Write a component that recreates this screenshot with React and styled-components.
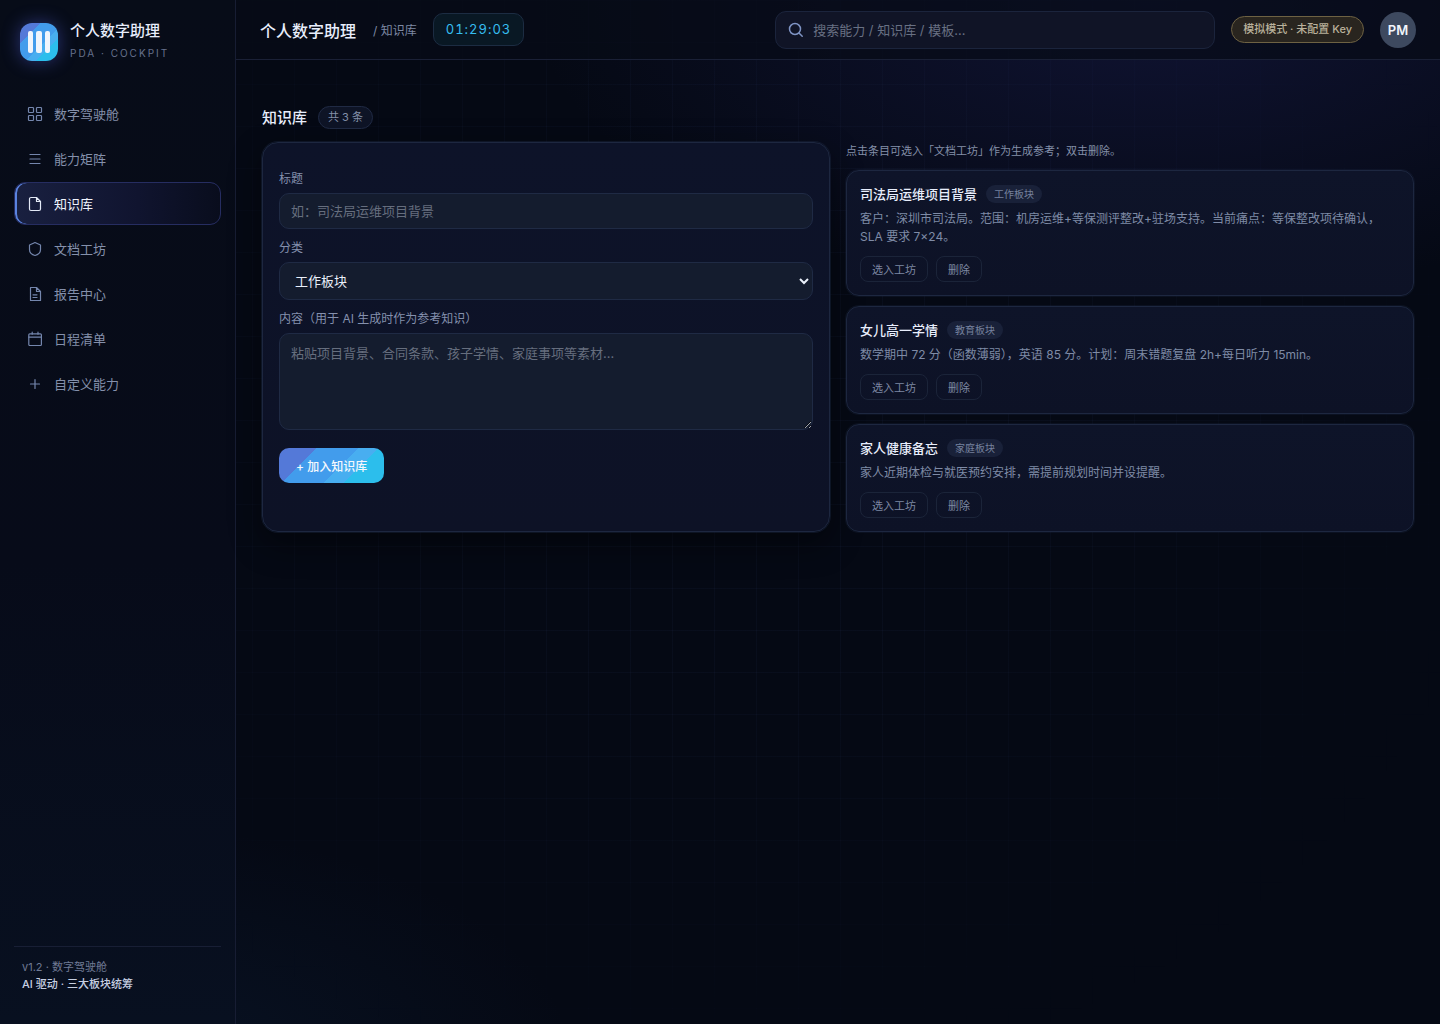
import React, { useState } from 'react';
import styled, { createGlobalStyle, css } from 'styled-components';

const GlobalStyle = createGlobalStyle`
  * {
    box-sizing: border-box;
  }
  body {
    margin: 0;
    background: #050914;
    color: #e8eefc;
    font-family: Inter, "Noto Sans CJK SC", sans-serif;
    font-size: 13px;
  }
  button, input, select, textarea {
    font-family: inherit;
  }
`;

const accent = 'linear-gradient(135deg, #5479d8 27%, #429cec 27%, #429cec 57%, #48aef0 57%, #48aef0 71%, #2cbeec 71%)';

const Shell = styled.div`
  display: grid;
  grid-template-columns: 236px 1fr;
  min-height: 100vh;
  position: relative;
  isolation: isolate;
  background:
    radial-gradient(ellipse 620px 300px at 80% 0, rgba(44, 46, 130, 0.28), transparent),
    radial-gradient(ellipse 460px 240px at 8% 104%, rgba(24, 62, 110, 0.18), transparent),
    #050914;

  &::before {
    content: "";
    position: absolute;
    inset: 0;
    z-index: -1;
    background-image:
      linear-gradient(rgba(120, 150, 230, 0.04) 1px, transparent 1px),
      linear-gradient(90deg, rgba(120, 150, 230, 0.04) 1px, transparent 1px);
    background-size: 42px 42px;
    mask-image: radial-gradient(ellipse at 50% 40%, #000 30%, transparent 80%);
  }
`;

const Sidebar = styled.aside`
  display: flex;
  flex-direction: column;
  padding: 22px 14px 23px;
  border-right: 1px solid #171d33;
  background: linear-gradient(180deg, #070c18, #070b19 55%, #081020);
`;

const Brand = styled.div`
  display: flex;
  align-items: center;
  gap: 12px;
  padding: 0 6px;
  margin-bottom: 30px;
`;

const Logo = styled.div`
  display: flex;
  align-items: center;
  justify-content: center;
  gap: 3px;
  width: 38px;
  height: 38px;
  border-radius: 12px;
  background: ${accent};
  box-shadow: 0 0 18px rgba(84, 100, 230, 0.45);

  i {
    width: 5px;
    height: 22px;
    border-radius: 2px;
    background: #f0f5fc;
  }
  i:nth-child(2) {
    width: 6px;
  }
`;

const BrandName = styled.div`
  font-size: 15px;
  line-height: 18px;
  font-weight: 500;
`;

const BrandSub = styled.div`
  margin-top: 7px;
  padding-bottom: 2px;
  font-size: 10px;
  line-height: 13px;
  letter-spacing: 2px;
  color: #66718c;
`;

const Nav = styled.nav`
  display: flex;
  flex-direction: column;
  gap: 2px;
`;

const NavItem = styled.a`
  display: flex;
  align-items: center;
  gap: 11px;
  height: 43px;
  padding: 0 12px;
  border: 1px solid transparent;
  border-radius: 11px;
  color: #8490ab;
  text-decoration: none;

  svg {
    color: #7486ad;
  }

  ${({ $active }) => $active && css`
    color: #f0f4fd;
    border-color: #262d61;
    background: linear-gradient(90deg, #192040, #10142f 60%, #090d1d);
    box-shadow: inset 2px 0 0 #5a83e0;

    svg {
      color: #e3e9f6;
    }
  `}
`;

const SideFooter = styled.footer`
  margin-top: auto;
  padding: 12px 8px 8px;
  border-top: 1px solid #181f35;
  font-size: 11px;
  line-height: 17px;
  color: #6f7a94;

  strong {
    display: block;
    font-weight: 500;
    color: #c6cfe2;
  }
`;

const Page = styled.div`
  display: flex;
  flex-direction: column;
  min-width: 0;
`;

const Topbar = styled.header`
  display: flex;
  align-items: center;
  gap: 16px;
  height: 60px;
  padding: 0 24px;
  border-bottom: 1px solid #1a2036;
  background: rgba(7, 11, 23, 0.7);
`;

const AppTitle = styled.h1`
  margin: 0 1px 0 0;
  font-size: 16px;
  font-weight: 500;
`;

const Crumb = styled.span`
  font-size: 12px;
  color: #7d88a3;
`;

const Clock = styled.time`
  padding: 0 12px;
  border: 1px solid #1c2c42;
  border-radius: 10px;
  background: #091824;
  color: #36bdf0;
  font-size: 13px;
  line-height: 31px;
  letter-spacing: 1px;
  font-variant-numeric: tabular-nums;
`;

const Search = styled.label`
  display: flex;
  align-items: center;
  gap: 9px;
  width: 440px;
  height: 38px;
  margin-left: auto;
  padding: 0 12px;
  border: 1px solid #1b243c;
  border-radius: 11px;
  background: #101426;
  color: #7f94c4;

  input {
    flex: 1;
    min-width: 0;
    padding: 0;
    border: 0;
    outline: 0;
    background: none;
    color: #e8eefc;
    font-size: 13px;
  }
  input::placeholder {
    color: #687083;
  }
`;

const ModeBadge = styled.span`
  padding: 0 11px;
  border: 1px solid #6e6243;
  border-radius: 14px;
  background: #29251f;
  color: #b9b19b;
  font-size: 11px;
  line-height: 25px;
  font-weight: 500;
  white-space: nowrap;
`;

const Avatar = styled.div`
  width: 36px;
  height: 36px;
  border-radius: 50%;
  background: #3d495f;
  color: #f1f5fb;
  font-size: 13px;
  line-height: 36px;
  font-weight: 600;
  text-align: center;
`;

const Content = styled.main`
  padding: 46px 26px;
`;

const Heading = styled.div`
  display: flex;
  align-items: center;
  gap: 11px;
  margin-bottom: 13px;

  h2 {
    margin: 0;
    font-size: 15px;
    line-height: 23px;
    font-weight: 500;
  }
`;

const Count = styled.span`
  padding: 0 9px;
  border: 1px solid #202a44;
  border-radius: 12px;
  background: #0e1426;
  color: #8490a9;
  font-size: 11px;
  line-height: 21px;
`;

const Columns = styled.div`
  display: grid;
  grid-template-columns: 1fr 1fr;
  gap: 16px;
`;

const FormPanel = styled.form`
  padding: 17px 16px;
  border: 1px solid #1d2740;
  border-radius: 16px;
  background: linear-gradient(180deg, #0d1329, #0d1226);
  box-shadow: 0 0 0 1px rgba(30, 42, 70, 0.4), 0 12px 32px rgba(0, 0, 0, 0.45);
`;

const Label = styled.label`
  display: block;
  padding-top: 10px;
  margin-bottom: 6px;
  font-size: 12px;
  line-height: 17px;
  color: #8490ad;
`;

const field = css`
  display: block;
  width: 100%;
  border: 1px solid #1f2a44;
  border-radius: 10px;
  outline: 0;
  background: #141c2e;
  color: #eaf0fb;
  font-size: 13px;
`;

const TextInput = styled.input`
  ${field}
  height: 36px;
  padding: 0 11px;

  &::placeholder {
    color: #666e7e;
  }
`;

const Select = styled.select`
  ${field}
  height: 38px;
  padding: 0 11px;
`;

const TextArea = styled.textarea`
  ${field}
  height: 97px;
  padding: 10px 11px;
  line-height: 19px;
  resize: vertical;

  &::placeholder {
    color: #666e7e;
  }
`;

const PrimaryButton = styled.button`
  height: 35px;
  margin-top: 18px;
  padding: 0 17px 1px;
  border: 0;
  border-radius: 10px;
  background: ${accent};
  color: #f4f8fd;
  font-size: 12px;
  font-weight: 500;
  cursor: pointer;
`;

const List = styled.section`
  display: flex;
  flex-direction: column;
  gap: 10px;
`;

const Hint = styled.p`
  margin: 0;
  font-size: 11px;
  line-height: 18px;
  color: #8490a9;
`;

const Card = styled.article`
  padding: 13px;
  border: 1px solid #1d2740;
  border-radius: 13px;
  background: linear-gradient(180deg, #0e1429, #0d1226);
  box-shadow: 0 0 0 1px rgba(30, 42, 70, 0.25);

  h3 {
    margin: 0;
    font-size: 13px;
    line-height: 20px;
    font-weight: 500;
  }
  p {
    margin: 6px 0 10px;
    font-size: 12px;
    line-height: 18px;
    color: #7f8ba6;
  }
`;

const CardHead = styled.div`
  display: flex;
  align-items: center;
  gap: 9px;
`;

const Tag = styled.span`
  padding: 0 8px;
  border-radius: 9px;
  background: #192139;
  color: #76829e;
  font-size: 10px;
  line-height: 18px;
`;

const Actions = styled.div`
  display: flex;
  gap: 8px;
`;

const SmallButton = styled.button`
  height: 26px;
  padding: 0 11px 1px;
  border: 1px solid #1b2439;
  border-radius: 8px;
  background: transparent;
  color: #7d88a3;
  font-size: 11px;
  cursor: pointer;
`;

const Icon = ({ children }) => (
  <svg width="16" height="16" viewBox="0 0 16 16" fill="none" stroke="currentColor"
    strokeWidth="1.2" strokeLinecap="round" strokeLinejoin="round" aria-hidden="true">
    {children}
  </svg>
);

const navItems = [
  {
    name: '数字驾驶舱',
    icon: (
      <>
        <rect x="1.5" y="1.5" width="5" height="5" rx="0.8" />
        <rect x="9.5" y="1.5" width="5" height="5" rx="0.8" />
        <rect x="1.5" y="9.5" width="5" height="5" rx="0.8" />
        <rect x="9.5" y="9.5" width="5" height="5" rx="0.8" />
      </>
    ),
  },
  { name: '能力矩阵', icon: <path d="M3 3.5h10M3 8h10M3 12.5h10" /> },
  { name: '知识库', icon: <path d="M9.5 1.5H4A1.5 1.5 0 0 0 2.5 3v10A1.5 1.5 0 0 0 4 14.5h8a1.5 1.5 0 0 0 1.5-1.5V5.5zM9.5 1.5v4h4" /> },
  { name: '文档工坊', icon: <path d="M8 1.5L13.5 4v4.5c0 3-2.2 5.2-5.5 6-3.3-.8-5.5-3-5.5-6V4z" /> },
  { name: '报告中心', icon: <path d="M9.5 1.5h-6v13h10v-9zM9.5 1.5v4h4M6 8.8h4M6 11.5h4" /> },
  { name: '日程清单', icon: <><rect x="1.8" y="2.8" width="12.6" height="11.7" rx="1" /><path d="M1.8 6.2h12.6M5.2 1.2v2M11 1.2v2" /></> },
  { name: '自定义能力', icon: <path d="M8 3.5v9M3.5 8h9" /> },
];

const entries = [
  { title: '司法局运维项目背景', tag: '工作板块', text: '客户：深圳市司法局。范围：机房运维+等保测评整改+驻场支持。当前痛点：等保整改项待确认，SLA 要求 7×24。' },
  { title: '女儿高一学情', tag: '教育板块', text: '数学期中 72 分（函数薄弱），英语 85 分。计划：周末错题复盘 2h+每日听力 15min。' },
  { title: '家人健康备忘', tag: '家庭板块', text: '家人近期体检与就医预约安排，需提前规划时间并设提醒。' },
];

function App() {
  const [active, setActive] = useState('知识库');

  return (
    <>
      <GlobalStyle />
      <Shell>
        <Sidebar>
          <Brand>
            <Logo><i /><i /><i /></Logo>
            <div>
              <BrandName>个人数字助理</BrandName>
              <BrandSub>PDA · COCKPIT</BrandSub>
            </div>
          </Brand>
          <Nav>
            {navItems.map(item => (
              <NavItem key={item.name} href="#" $active={item.name === active} onClick={() => setActive(item.name)}>
                <Icon>{item.icon}</Icon>
                {item.name}
              </NavItem>
            ))}
          </Nav>
          <SideFooter>
            v1.2 · 数字驾驶舱
            <strong>AI 驱动 · 三大板块统筹</strong>
          </SideFooter>
        </Sidebar>

        <Page>
          <Topbar>
            <AppTitle>个人数字助理</AppTitle>
            <Crumb>/ 知识库</Crumb>
            <Clock>01:29:03</Clock>
            <Search>
              <svg width="16" height="16" viewBox="0 0 16 16" fill="none" stroke="currentColor" strokeWidth="1.5" strokeLinecap="round" aria-hidden="true">
                <circle cx="7" cy="7" r="5.5" />
                <path d="M11.2 11.2l3 3" />
              </svg>
              <input type="search" aria-label="搜索" placeholder="搜索能力 / 知识库 / 模板…" />
            </Search>
            <ModeBadge>模拟模式 · 未配置 Key</ModeBadge>
            <Avatar>PM</Avatar>
          </Topbar>

          <Content>
            <Heading>
              <h2>知识库</h2>
              <Count>共 {entries.length} 条</Count>
            </Heading>
            <Columns>
              <FormPanel onSubmit={e => e.preventDefault()}>
                <Label htmlFor="title">标题</Label>
                <TextInput id="title" placeholder="如：司法局运维项目背景" />
                <Label htmlFor="category">分类</Label>
                <Select id="category">
                  <option>工作板块</option>
                  <option>教育板块</option>
                  <option>家庭板块</option>
                </Select>
                <Label htmlFor="body">内容（用于 AI 生成时作为参考知识）</Label>
                <TextArea id="body" placeholder="粘贴项目背景、合同条款、孩子学情、家庭事项等素材…" />
                <PrimaryButton type="submit">+ 加入知识库</PrimaryButton>
              </FormPanel>
              <List>
                <Hint>点击条目可选入「文档工坊」作为生成参考；双击删除。</Hint>
                {entries.map(entry => (
                  <Card key={entry.title}>
                    <CardHead>
                      <h3>{entry.title}</h3>
                      <Tag>{entry.tag}</Tag>
                    </CardHead>
                    <p>{entry.text}</p>
                    <Actions>
                      <SmallButton type="button">选入工坊</SmallButton>
                      <SmallButton type="button">删除</SmallButton>
                    </Actions>
                  </Card>
                ))}
              </List>
            </Columns>
          </Content>
        </Page>
      </Shell>
    </>
  );
}

export default App;
